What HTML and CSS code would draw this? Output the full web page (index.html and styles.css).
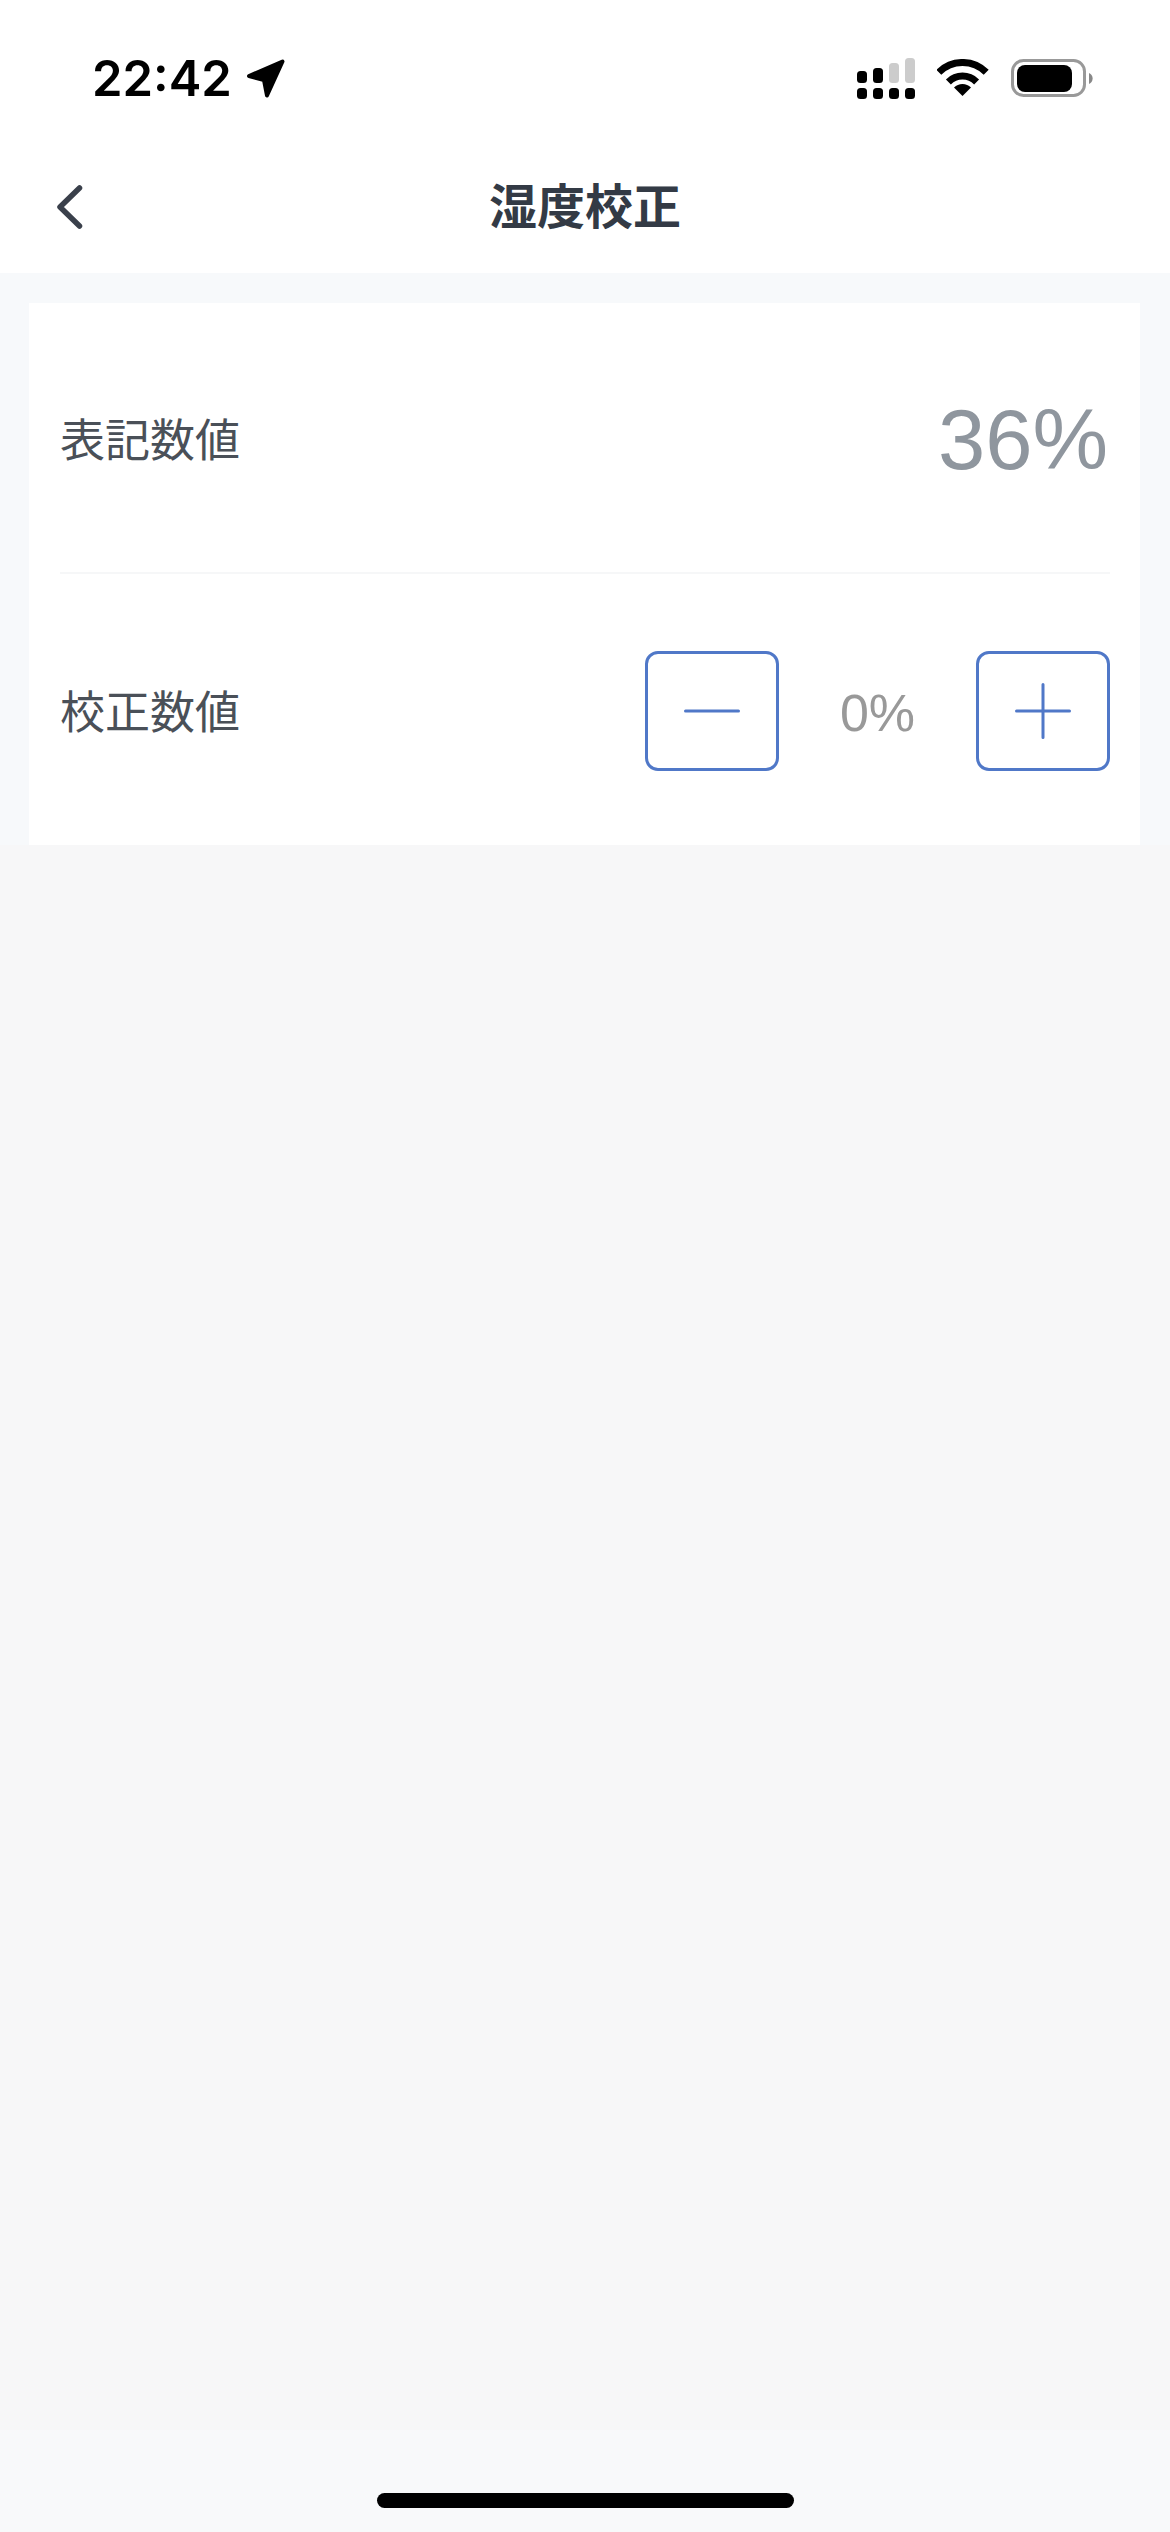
FILE: index.html
```html
<!DOCTYPE html>
<html lang="ja">
<head>
    <meta charset="UTF-8">
    <meta name="viewport" content="width=device-width, initial-scale=1.0">
    <title>湿度校正</title>
    <link rel="stylesheet" href="styles.css">
</head>
<body>
    <div class="page">
        <header class="top">
            <div class="status-bar">
                <div class="status-left">
                    <span class="clock">22:42</span>
                    <svg class="arrow-icon" viewBox="0 0 39 39" width="39" height="39">
                        <path d="M3 17 L36.5 2.5 L21 36.5 L18 21 Z" fill="#000" stroke="#000" stroke-width="4" stroke-linejoin="round"/>
                    </svg>
                </div>
                <div class="status-right">
                    <svg viewBox="0 0 58 41" width="58" height="41">
                        <rect x="0" y="13" width="10" height="12" rx="3.5" fill="#000"/>
                        <rect x="16" y="10" width="10" height="15" rx="3.5" fill="#000"/>
                        <rect x="32" y="5" width="10" height="20" rx="3.5" fill="#ccc"/>
                        <rect x="48" y="0" width="10" height="25" rx="3.5" fill="#ccc"/>
                        <rect x="0" y="30" width="10" height="11" rx="3.5" fill="#000"/>
                        <rect x="16" y="30" width="10" height="11" rx="3.5" fill="#000"/>
                        <rect x="32" y="30" width="10" height="11" rx="3.5" fill="#000"/>
                        <rect x="48" y="30" width="10" height="11" rx="3.5" fill="#000"/>
                    </svg>
                    <svg class="wifi-icon" viewBox="0 0 52 38" width="52" height="38">
                        <path d="M1.8 13.3 A33.5 33.5 0 0 1 49.2 13.3" fill="none" stroke="#000" stroke-width="7"/>
                        <path d="M11.4 22.9 A20 20 0 0 1 39.6 22.9" fill="none" stroke="#000" stroke-width="7"/>
                        <path d="M25.5 37 L17 28.5 A12 12 0 0 1 34 28.5 Z" fill="#000"/>
                    </svg>
                    <svg class="battery-icon" viewBox="0 0 83 38" width="83" height="38">
                        <rect x="1.5" y="1.5" width="72" height="35" rx="11" fill="none" stroke="#999" stroke-width="3"/>
                        <rect x="6" y="6" width="55" height="27" rx="8" fill="#000"/>
                        <path d="M78 14 A6 6 0 0 1 78 25 Z" fill="#888"/>
                    </svg>
                </div>
            </div>
            <nav class="nav-bar">
                <svg class="back-icon" viewBox="0 0 28 46" width="28" height="46">
                    <path d="M23.5 3 L4 22 L23.5 41" fill="none" stroke="#3a404b" stroke-width="5.5" stroke-linecap="round" stroke-linejoin="round"/>
                </svg>
                <h1 class="nav-title">湿度校正</h1>
                <span></span>
            </nav>
        </header>

        <section class="content">
            <div class="card">
                <div class="row row-reading">
                    <span class="row-label">表記数値</span>
                    <span class="reading">36%</span>
                </div>
                <div class="row row-adjust">
                    <span class="row-label">校正数値</span>
                    <div class="stepper">
                        <button class="step-btn" type="button" aria-label="minus">
                            <svg viewBox="0 0 56 56" width="56" height="56">
                                <path d="M1.5 28 H54.5" stroke="#5078c8" stroke-width="3" stroke-linecap="round"/>
                            </svg>
                        </button>
                        <span class="step-value">0%</span>
                        <button class="step-btn" type="button" aria-label="plus">
                            <svg viewBox="0 0 56 56" width="56" height="56">
                                <path d="M1.5 28 H54.5 M28 1.5 V54.5" stroke="#5078c8" stroke-width="3" stroke-linecap="round"/>
                            </svg>
                        </button>
                    </div>
                </div>
            </div>
        </section>

        <div class="filler"></div>

        <footer class="home-area">
            <div class="home-bar"></div>
        </footer>
    </div>
</body>
</html>
```

FILE: styles.css
```css
html, body {
    margin: 0;
    padding: 0;
}

body {
    font-family: "Liberation Sans", "Noto Sans CJK JP", sans-serif;
    background-color: #f7f7f8;
}

.page {
    display: flex;
    flex-direction: column;
    height: 2532px;
}

/* Top area */
.top {
    background: #fff;
}

.status-bar {
    box-sizing: border-box;
    height: 142px;
    padding: 14px 76px 0 92px;
    display: flex;
    justify-content: space-between;
    align-items: center;
}

.status-left {
    display: flex;
    align-items: center;
    gap: 14px;
}

.clock {
    font-family: Inter, "Liberation Sans", sans-serif;
    font-size: 49px;
    font-weight: 600;
    line-height: 1;
    color: #000;
}

.status-right {
    display: flex;
    align-items: center;
    gap: 22px;
}

.arrow-icon,
.status-right svg,
.back-icon {
    display: block;
}

.nav-bar {
    box-sizing: border-box;
    height: 131px;
    padding: 0 56px;
    display: grid;
    grid-template-columns: 1fr auto 1fr;
    align-items: center;
}

.nav-title {
    margin: 0;
    font-size: 48px;
    font-weight: 700;
    line-height: 1;
    color: #333a45;
}

/* Card */
.content {
    padding: 30px 30px 0 29px;
    background: #f7f9fb;
}

.card {
    background: #fff;
    padding: 0 30px 0 31px;
}

.row {
    display: flex;
    justify-content: space-between;
    align-items: center;
}

.row-reading {
    box-sizing: border-box;
    height: 271px;
    border-bottom: 2px solid #f6f7f8;
}

.row-adjust {
    height: 271px;
}

.row-label {
    margin-top: 8px;
    font-size: 45px;
    line-height: 1;
    color: #4a5058;
}

.reading {
    margin-top: 3px;
    font-size: 85px;
    line-height: 1;
    padding-right: 2px;
    color: #8f969e;
}

.stepper {
    margin-top: 3px;
    display: flex;
    align-items: center;
}

.step-btn {
    box-sizing: border-box;
    width: 134px;
    height: 120px;
    padding: 0;
    background: #fff;
    border: 3px solid #5078c8;
    border-radius: 13px;
    display: flex;
    justify-content: center;
    align-items: center;
}

.step-value {
    width: 197px;
    margin-top: 3px;
    text-align: center;
    font-size: 52px;
    line-height: 1;
    color: #999;
}

.filler {
    flex: 1;
}

/* Home indicator */
.home-area {
    height: 102px;
    background: #f8f9fa;
    display: flex;
    justify-content: center;
    padding-top: 63px;
    box-sizing: border-box;
}

.home-bar {
    width: 417px;
    height: 15px;
    border-radius: 8px;
    background: #000;
}
```
